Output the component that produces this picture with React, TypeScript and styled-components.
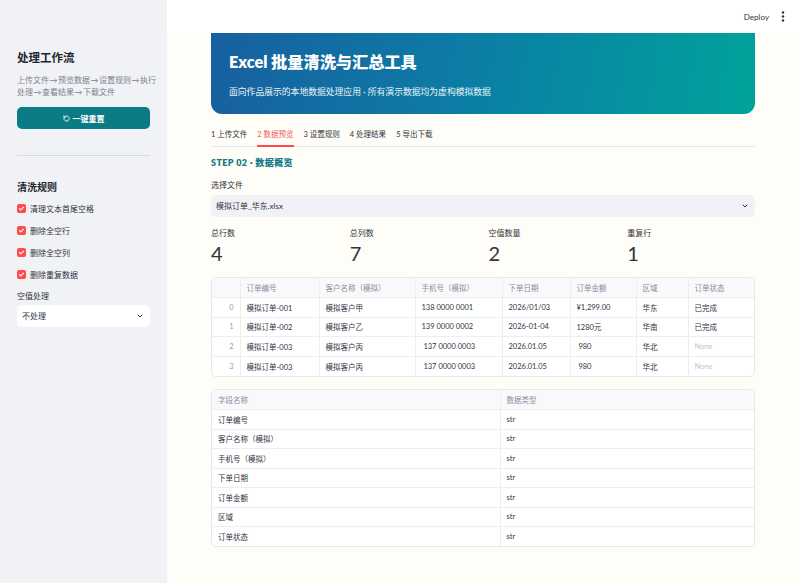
import React from "react";
import styled, { createGlobalStyle } from "styled-components";

const Global = createGlobalStyle`
  html, body { margin: 0; padding: 0; }
  body {
    font-family: "Lato", "Noto Sans CJK SC", sans-serif;
    color: #31333f;
    -webkit-font-smoothing: antialiased;
  }
  * { box-sizing: border-box; }
`;

const Shell = styled.div`
  display: flex;
  width: 800px;
  height: 583px;
  overflow: hidden;
`;

const Sidebar = styled.aside`
  width: 167px;
  flex: none;
  background: #f0f2f6;
  padding: 49px 17px 0 17px;
  display: flex;
  flex-direction: column;
`;

const SideTitle = styled.h2<{ $size: number }>`
  margin: 0;
  font-size: ${(p) => p.$size}px;
  font-weight: 700;
  line-height: 18px;
  color: #262730;
`;

const SideDesc = styled.p`
  margin: 7px 0 0 0;
  font-family: "Lato", "DejaVu Sans", "Noto Sans CJK SC", sans-serif;
  font-size: 8px;
  line-height: 12px;
  color: #7d8190;
  white-space: nowrap;
`;

const ResetButton = styled.button`
  margin-top: 9px;
  height: 22px;
  width: 133px;
  border: none;
  border-radius: 5px;
  background: #0b7c85;
  color: #fff;
  font-family: inherit;
  font-size: 8px;
  font-weight: 700;
  display: flex;
  align-items: center;
  justify-content: center;
  gap: 3px;
`;

const Divider = styled.hr`
  margin: 26px 0 22px 0;
  border: none;
  border-top: 1px solid #d5d8de;
  width: 133px;
`;

const CheckRow = styled.label`
  display: flex;
  align-items: center;
  gap: 4px;
  height: 22px;
  font-size: 8px;
  color: #31333f;
`;

const CheckBox = styled.span`
  width: 9px;
  height: 9px;
  border-radius: 2px;
  background: #ff4b4b;
  display: inline-flex;
  align-items: center;
  justify-content: center;
`;

const CheckList = styled.div`
  margin-top: 1px;
  display: flex;
  flex-direction: column;
`;

const FieldLabel = styled.div<{ $mt: number }>`
  margin-top: ${(p) => p.$mt}px;
  font-size: 8px;
  line-height: 12px;
  color: #31333f;
`;

const SelectBox = styled.div<{ $bg: string; $w?: number; $mt: number }>`
  margin-top: ${(p) => p.$mt}px;
  height: 21.5px;
  width: ${(p) => (p.$w ? `${p.$w}px` : "100%")};
  border-radius: 5px;
  background: ${(p) => p.$bg};
  display: flex;
  align-items: center;
  justify-content: space-between;
  padding: 0 6px 0 5px;
  font-size: 8px;
  color: #31333f;
`;

const Main = styled.main`
  flex: 1;
  background: #fffdf7;
  display: flex;
  flex-direction: column;
  min-width: 0;
`;

const Header = styled.header`
  height: 33px;
  flex: none;
  background: #ffffff;
  display: flex;
  align-items: center;
  justify-content: flex-end;
  padding-right: 15px;
  gap: 12px;
  font-size: 8px;
  color: #31333f;
`;

const Content = styled.div`
  padding: 0 45px 0 44px;
  display: flex;
  flex-direction: column;
`;

const Banner = styled.section`
  height: 81px;
  border-radius: 0 0 11px 11px;
  background: linear-gradient(100deg, #185f9f 0%, #0b7fa6 50%, #00a39a 100%);
  padding: 17px 18px 0 18px;
  color: #fff;
`;

const BannerTitle = styled.h1`
  margin: 0;
  font-size: 16.2px;
  line-height: 24px;
  font-weight: 800;
`;

const BannerSub = styled.p`
  margin: 12px 0 0 0;
  font-size: 8.8px;
  line-height: 12px;
  color: #e8f3f6;
`;

const Tabs = styled.nav`
  margin-top: 14px;
  display: flex;
  gap: 10px;
  border-bottom: 1px solid #e4e6eb;
  height: 19px;
`;

const Tab = styled.div<{ $active?: boolean }>`
  font-size: 7.5px;
  line-height: 14px;
  color: ${(p) => (p.$active ? "#f25c5c" : "#31333f")};
  border-bottom: 2px solid ${(p) => (p.$active ? "#ff4b4b" : "transparent")};
  height: 19px;
  white-space: pre;
`;

const StepTitle = styled.h3`
  margin: 9px 0 0 0;
  font-size: 9px;
  line-height: 14px;
  font-weight: 800;
  color: #0f7a86;
  letter-spacing: 0.4px;
`;

const Metrics = styled.div`
  margin-top: 10px;
  display: grid;
  grid-template-columns: repeat(4, 1fr);
  column-gap: 11px;
`;

const Metric = styled.div`
  display: flex;
  flex-direction: column;
`;

const MetricLabel = styled.div`
  font-size: 8px;
  line-height: 12px;
  color: #31333f;
`;

const MetricValue = styled.div`
  margin-top: 3px;
  font-size: 20px;
  line-height: 22px;
  color: #31333f;
`;

const TableWrap = styled.div<{ $mt: number }>`
  margin-top: ${(p) => p.$mt}px;
  border: 1px solid #e6e8ed;
  border-radius: 5px;
  overflow: hidden;
  background: #fff;
`;

const Table = styled.table`
  width: 100%;
  border-collapse: collapse;
  table-layout: fixed;
  font-size: 7.5px;
`;

const Th = styled.th`
  height: 20px;
  background: #f8f9fb;
  color: #8a8d99;
  font-weight: 400;
  text-align: left;
  padding: 0 6px;
  border-right: 1px solid #eceef2;
  border-bottom: 1px solid #eceef2;
  &:last-child { border-right: none; }
`;

const Td = styled.td<{ $muted?: boolean; $index?: boolean }>`
  height: 19.5px;
  padding: 0 6px;
  color: ${(p) => (p.$muted ? "#c3c6cd" : p.$index ? "#9a9ca6" : "#31333f")};
  text-align: ${(p) => (p.$index ? "right" : "left")};
  border-right: 1px solid #eceef2;
  border-bottom: 1px solid #eceef2;
  white-space: pre;
  overflow: hidden;
  &:last-child { border-right: none; }
  tr:last-child & { border-bottom: none; }
`;

const Chevron = () => (
  <svg width="8" height="8" viewBox="0 0 24 24" fill="none" stroke="#31333f" strokeWidth="3" strokeLinecap="round" strokeLinejoin="round">
    <path d="M6 9l6 6 6-6" />
  </svg>
);

const Check = () => (
  <svg width="7" height="7" viewBox="0 0 24 24" fill="none" stroke="#fff" strokeWidth="4" strokeLinecap="round" strokeLinejoin="round">
    <path d="M5 12.5l4.5 4.5L19 7.5" />
  </svg>
);

const ResetIcon = () => (
  <svg width="7" height="7" viewBox="0 0 24 24" fill="none" stroke="#fff" strokeWidth="3" strokeLinecap="round" strokeLinejoin="round">
    <path d="M3 12a9 9 0 1 0 3-6.7" />
    <path d="M3 3v5h5" />
  </svg>
);

const Kebab = () => (
  <svg width="4" height="11" viewBox="0 0 4 11" fill="#31333f">
    <circle cx="2" cy="1.5" r="1.2" />
    <circle cx="2" cy="5.5" r="1.2" />
    <circle cx="2" cy="9.5" r="1.2" />
  </svg>
);

const SEP = "\u200a→\u200a";
const rules = ["清理文本首尾空格", "删除全空行", "删除全空列", "删除重复数据"];
const tabs = ["1 上传文件", "2 数据预览", "3 设置规则", "4 处理结果", "5 导出下载"];
const metrics: [string, string][] = [
  ["总行数", "4"],
  ["总列数", "7"],
  ["空值数量", "2"],
  ["重复行", "1"],
];
const cols = ["订单编号", "客户名称（模拟）", "手机号（模拟）", "下单日期", "订单金额", "区域", "订单状态"];
const widths = [28, 79, 96, 87, 68, 66, 52, 67];
const rows: (string | null)[][] = [
  ["模拟订单-001", "模拟客户甲", "138 0000 0001", "2026/01/03", "¥1,299.00", "华东", "已完成"],
  ["模拟订单-002", "模拟客户乙", "139 0000 0002", "2026-01-04", "1280元", "华南", "已完成"],
  ["模拟订单-003", "模拟客户丙", " 137 0000 0003", "2026.01.05", " 980", "华北", null],
  ["模拟订单-003", "模拟客户丙", " 137 0000 0003", "2026.01.05", " 980", "华北", null],
];

export default function App() {
  return (
    <>
      <Global />
      <Shell>
        <Sidebar>
          <SideTitle $size={11.5}>处理工作流</SideTitle>
          <SideDesc>
            {["上传文件", "预览数据", "设置规则", "执行"].join(SEP)}
            <br />
            {["处理", "查看结果", "下载文件"].join(SEP)}
          </SideDesc>
          <ResetButton>
            <ResetIcon />
            一键重置
          </ResetButton>
          <Divider />
          <SideTitle $size={10}>清洗规则</SideTitle>
          <CheckList>
            {rules.map((r) => (
              <CheckRow key={r}>
                <CheckBox>
                  <Check />
                </CheckBox>
                {r}
              </CheckRow>
            ))}
          </CheckList>
          <FieldLabel $mt={5}>空值处理</FieldLabel>
          <SelectBox $bg="#ffffff" $w={133} $mt={3}>
            不处理
            <Chevron />
          </SelectBox>
        </Sidebar>
        <Main>
          <Header>
            <span>Deploy</span>
            <Kebab />
          </Header>
          <Content>
            <Banner>
              <BannerTitle>Excel 批量清洗与汇总工具</BannerTitle>
              <BannerSub>面向作品展示的本地数据处理应用 · 所有演示数据均为虚构模拟数据</BannerSub>
            </Banner>
            <Tabs>
              {tabs.map((t, i) => (
                <Tab key={t} $active={i === 1}>
                  {t}
                </Tab>
              ))}
            </Tabs>
            <StepTitle>STEP 02 · 数据概览</StepTitle>
            <FieldLabel $mt={9}>选择文件</FieldLabel>
            <SelectBox $bg="#f0f2f6" $mt={4}>
              模拟订单_华东.xlsx
              <Chevron />
            </SelectBox>
            <Metrics>
              {metrics.map(([l, v]) => (
                <Metric key={l}>
                  <MetricLabel>{l}</MetricLabel>
                  <MetricValue>{v}</MetricValue>
                </Metric>
              ))}
            </Metrics>
            <TableWrap $mt={13}>
              <Table>
                <colgroup>
                  {widths.map((w, i) => (
                    <col key={i} style={{ width: w }} />
                  ))}
                </colgroup>
                <thead>
                  <tr>
                    <Th />
                    {cols.map((c) => (
                      <Th key={c}>{c}</Th>
                    ))}
                  </tr>
                </thead>
                <tbody>
                  {rows.map((r, i) => (
                    <tr key={i}>
                      <Td $index>{i}</Td>
                      {r.map((c, j) => (
                        <Td key={j} $muted={c === null}>
                          {c === null ? "None" : c}
                        </Td>
                      ))}
                    </tr>
                  ))}
                </tbody>
              </Table>
            </TableWrap>
            <TableWrap $mt={12}>
              <Table>
                <colgroup>
                  <col style={{ width: 288 }} />
                  <col style={{ width: 256 }} />
                </colgroup>
                <thead>
                  <tr>
                    <Th>字段名称</Th>
                    <Th>数据类型</Th>
                  </tr>
                </thead>
                <tbody>
                  {cols.map((c) => (
                    <tr key={c}>
                      <Td>{c}</Td>
                      <Td>str</Td>
                    </tr>
                  ))}
                </tbody>
              </Table>
            </TableWrap>
          </Content>
        </Main>
      </Shell>
    </>
  );
}
